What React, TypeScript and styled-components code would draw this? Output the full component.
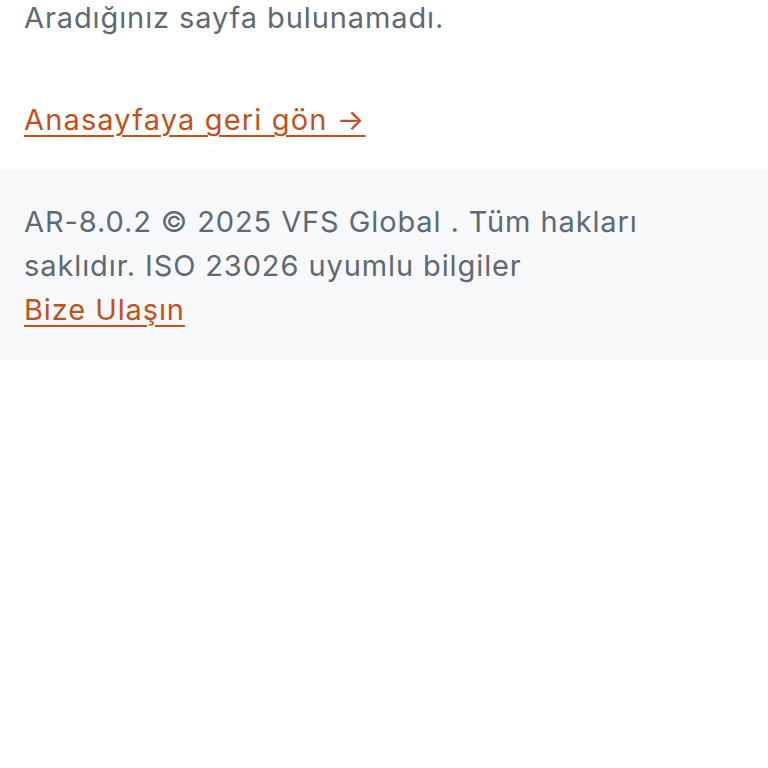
import React from "react";
import styled, { createGlobalStyle } from "styled-components";

const Global = createGlobalStyle`
  html, body { margin: 0; padding: 0; background: #ffffff; }
  body { font-family: Inter, "Noto Sans", sans-serif; -webkit-font-smoothing: antialiased; }
  * { box-sizing: border-box; }
`;

const Page = styled.div`
  display: flex;
  flex-direction: column;
  overflow: hidden;
`;

const Main = styled.main`
  display: flex;
  flex-direction: column;
  gap: 58px;
  padding: 0 24px 28px;
  margin-top: -4px;
`;

const Message = styled.p`
  margin: 0;
  font-size: 29px;
  line-height: 44px;
  letter-spacing: 0.9px;
  color: #5f6973;
`;

const HomeLink = styled.a`
  font-size: 29px;
  line-height: 44px;
  letter-spacing: 1.15px;
  color: #bf5220;
  text-decoration: underline;
  text-underline-offset: 5px;
  text-decoration-thickness: 2px;
  align-self: flex-start;
`;

const Footer = styled.footer`
  background: #f6f8fa;
  padding: 30px 24px 28px;
  display: flex;
  flex-direction: column;
`;

const FooterText = styled.p`
  margin: 0;
  font-size: 29px;
  line-height: 44px;
  letter-spacing: 0.9px;
  color: #5f6973;
  max-width: 660px;
`;

const FooterLink = styled.a`
  font-size: 29px;
  line-height: 44px;
  letter-spacing: 0.9px;
  color: #bf5220;
  text-decoration: underline;
  text-underline-offset: 5px;
  text-decoration-thickness: 2px;
  align-self: flex-start;
`;

export default function App() {
  return (
    <Page>
      <Global />
      <Main>
        <Message>Aradığınız sayfa bulunamadı.</Message>
        <HomeLink href="#">Anasayfaya geri gön →</HomeLink>
      </Main>
      <Footer>
        <FooterText>
          AR-8.0.2 © 2025 VFS Global . Tüm hakları saklıdır. ISO 23026 uyumlu bilgiler
        </FooterText>
        <FooterLink href="#">Bize Ulaşın</FooterLink>
      </Footer>
    </Page>
  );
}
